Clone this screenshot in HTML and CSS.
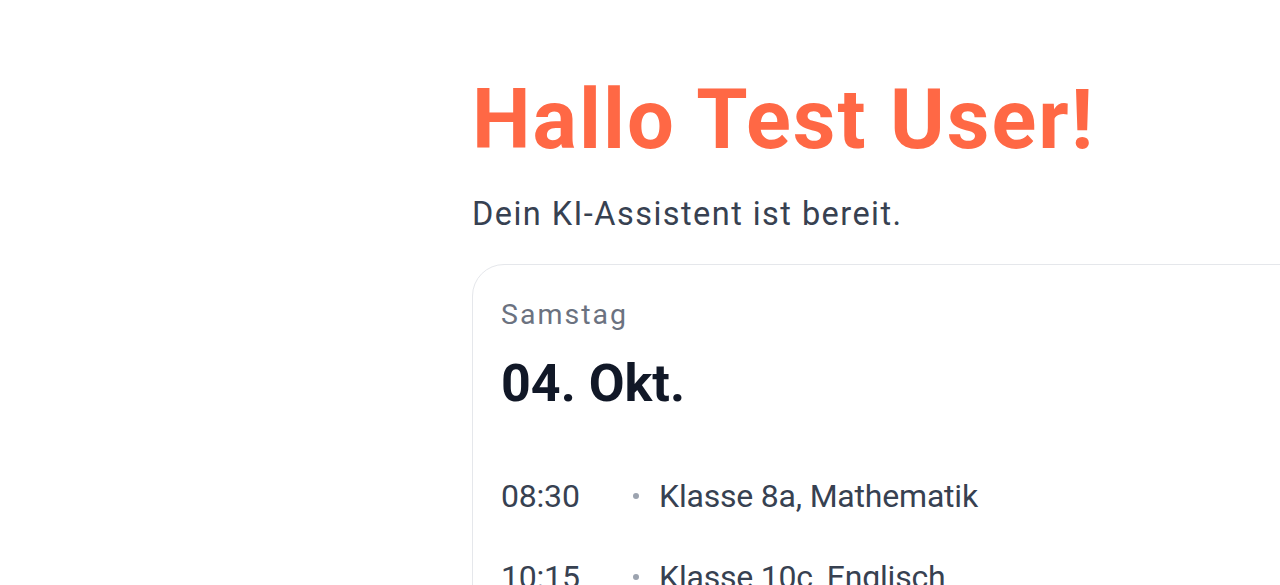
FILE: index.html
```html
<!DOCTYPE html>
<html lang="de">
<head>
<meta charset="utf-8">
<title>Dashboard</title>
<link rel="stylesheet" href="styles.css">
</head>
<body>
<main class="page">
  <section class="content">
    <h1 class="greeting">Hallo Test User!</h1>
    <p class="subtitle">Dein KI-Assistent ist bereit.</p>
    <div class="card">
      <div class="weekday">Samstag</div>
      <div class="date">04. Okt.</div>
      <ul class="schedule">
        <li class="row"><span class="time">08:30</span><span class="dot"></span><span class="label">Klasse 8a, Mathematik</span></li>
        <li class="row"><span class="time">10:15</span><span class="dot"></span><span class="label">Klasse 10c, Englisch</span></li>
      </ul>
    </div>
  </section>
</main>
</body>
</html>
```
FILE: styles.css
```css
html, body {
  margin: 0;
  padding: 0;
  background: #ffffff;
  font-family: Roboto, "Liberation Sans", sans-serif;
  overflow: hidden;
}
.page {
  display: flex;
  padding-left: 472px;
  padding-top: 75px;
}
.content {
  flex: 1;
  min-width: 0;
}
.greeting {
  margin: 0;
  font-size: 83px;
  line-height: 90px;
  font-weight: 700;
  letter-spacing: 2px;
  color: #ff6845;
}
.subtitle {
  margin: 25px 0 0;
  font-size: 32.5px;
  line-height: 48px;
  letter-spacing: 1.45px;
  color: #374151;
}
.card {
  margin-top: 26px;
  width: 1000px;
  border: 1px solid #e5e7eb;
  border-radius: 32px;
  padding: 29px 28px 28px;
}
.weekday {
  font-size: 28.5px;
  line-height: 42px;
  letter-spacing: 2px;
  color: #6b7280;
}
.date {
  margin-top: 17px;
  font-size: 52px;
  line-height: 62px;
  font-weight: 700;
  color: #111827;
}
.schedule {
  list-style: none;
  margin: 57px 0 0;
  padding: 0;
  display: flex;
  flex-direction: column;
  gap: 33px;
}
.row {
  display: flex;
  align-items: center;
  font-size: 32px;
  line-height: 48px;
  letter-spacing: -0.2px;
  color: #374151;
}
.time {
  width: 132px;
}
.dot {
  width: 6px;
  height: 6px;
  border-radius: 50%;
  background: #9ca3af;
  margin-right: 20px;
}
```
